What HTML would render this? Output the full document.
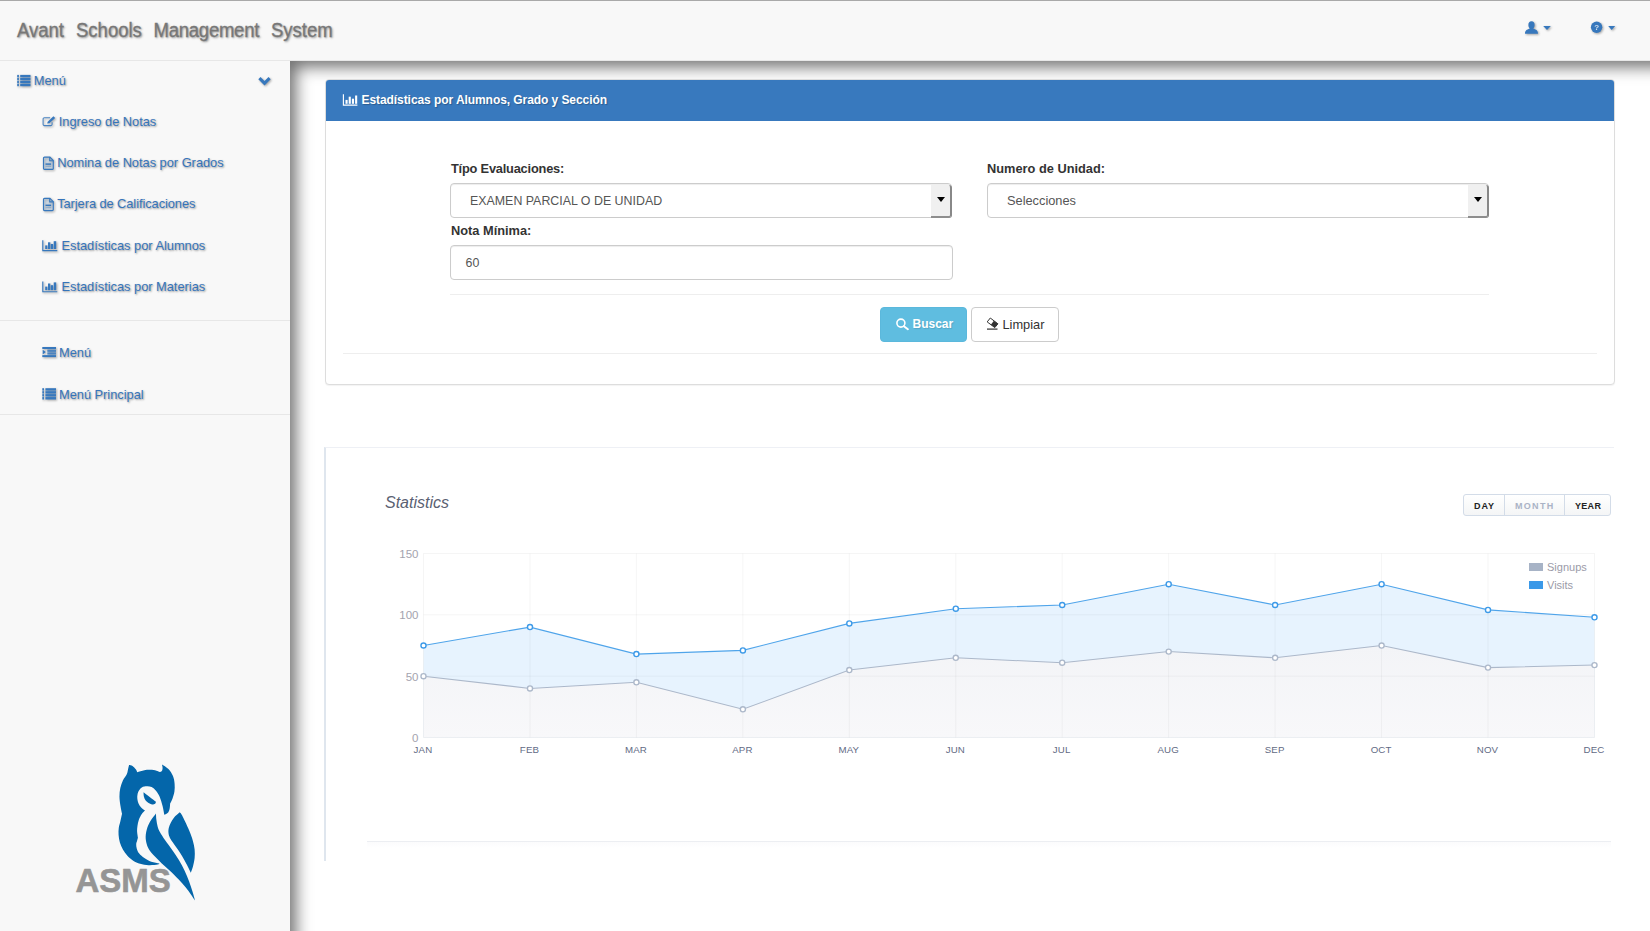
<!DOCTYPE html>
<html lang="es">
<head>
<meta charset="utf-8">
<title>Avant Schools Management System</title>
<style>
*{box-sizing:border-box;margin:0;padding:0}
html,body{width:1650px;height:931px;overflow:hidden;background:#fff;font-family:"Liberation Sans",Arial,sans-serif;font-size:13px;color:#333}
#page{position:relative;width:1650px;height:931px;overflow:hidden}
.abs{position:absolute}
svg{display:block;overflow:visible}
/* navbar */
#nav{position:absolute;left:0;top:0;width:1650px;height:61px;background:#f8f8f8;border-top:1px solid #a9a9a9;border-bottom:1px solid #e7e7e7}
#brand{position:absolute;left:17px;top:18px;font-size:18.5px;line-height:24px;color:#777;-webkit-text-stroke:.25px #777;text-shadow:1px 1px 2px rgba(0,0,0,.45);white-space:nowrap}
#brand span{position:absolute;top:0;transform:translateY(-.4px) scaleY(1.135);transform-origin:0 17.8px}
/* sidebar */
#side{position:absolute;left:0;top:61px;width:290px;height:870px;background:#f8f8f8}
.sl{position:absolute;white-space:nowrap;color:#3674ba;font-size:12.8px;line-height:16px;text-shadow:1px 1px 2px rgba(0,0,0,.4)}
.hr{position:absolute;left:0;width:290px;height:1px;background:#e7e7e7}
.ic{position:absolute;left:0;top:0;filter:drop-shadow(1px 1px 1px rgba(0,0,0,.35))}
/* main */
#main{position:absolute;left:290px;top:61px;width:1420px;height:930px;background:#fff;box-shadow:inset 6px 6px 16px 0 rgba(0,0,0,.56)}
/* panel */
#panel{position:absolute;left:325px;top:79px;width:1290px;height:306px;border:1px solid #ddd;border-radius:4px;background:#fff;box-shadow:0 1px 1px rgba(0,0,0,.05)}
#phead{position:absolute;left:0;top:0;width:1288px;height:41px;background:#3879be;border-radius:3px 3px 0 0;color:#fff;font-size:12px;font-weight:bold}
label.l{position:absolute;font-weight:bold;font-size:12.8px;line-height:16px;color:#333;white-space:nowrap}
.inp{position:absolute;height:35px;border:1px solid #ccc;border-radius:4px;background:#fff;box-shadow:inset 0 1px 1px rgba(0,0,0,.075);font-size:12.4px;color:#555;line-height:34.5px;white-space:nowrap}
.dd{position:absolute;right:-1px;top:1px;width:21px;height:33px;background:#f0f0f0;border-right:2px solid #888;border-bottom:2px solid #8e8e8e;border-radius:0 3px 3px 0}
.dd:after{content:"";position:absolute;left:5.5px;top:11.8px;border-left:4.5px solid transparent;border-right:4.5px solid transparent;border-top:5.5px solid #000}
.line{position:absolute;height:1px;background:#eee}
.btn{position:absolute;height:35px;border-radius:4px;font-size:12px;line-height:33px;white-space:nowrap;text-align:left}
/* chart box */
#cbox{position:absolute;left:324px;top:447px;width:1290px;height:414px;border-top:1px solid #eef0f5;border-left:2px solid #dfe6ee}
#cfoot{position:absolute;left:367px;top:841px;width:1244px;height:20px;border-top:1px solid #eceef2;background:linear-gradient(#fbfbfc,#fff 6px)}
#bg{position:absolute;left:1463px;top:494px;width:148px;height:22px;border:1px solid #d3dce8;border-radius:3px;background:linear-gradient(#fff,#f4f5f6);font-size:9px;font-weight:bold;color:#222}
#bg span{position:absolute;top:.5px;line-height:21px;letter-spacing:.3px}
#bg i{position:absolute;top:0;width:1px;height:20px;background:#d3dce8}
#asms{position:absolute;left:75.5px;top:862.2px;font-size:33px;line-height:38px;font-weight:bold;color:#959595;letter-spacing:0px;-webkit-text-stroke:.6px #959595}
</style>
</head>
<body>
<div id="page">
  <div id="main"></div>
  <div id="nav">
    <div id="brand"><span style="left:0">Avant</span> <span style="left:59px">Schools</span> <span style="left:136.6px;letter-spacing:-.25px">Management</span> <span style="left:254px">System</span></div>
  </div>
  <div id="side">
    <div class="sl" style="left:33.8px;top:12px">Menú</div>
    <div class="sl" style="left:58.8px;top:53px">Ingreso de Notas</div>
    <div class="sl" style="left:57.2px;top:94px">Nomina de Notas por Grados</div>
    <div class="sl" style="left:57.2px;top:135px;letter-spacing:-.05px">Tarjera de Calificaciones</div>
    <div class="sl" style="left:61.5px;top:177px">Estadísticas por Alumnos</div>
    <div class="sl" style="left:61.5px;top:218px">Estadísticas por Materias</div>
    <div class="hr" style="top:259px"></div>
    <div class="sl" style="left:59px;top:284px">Menú</div>
    <div class="sl" style="left:59px;top:325.5px">Menú Principal</div>
    <div class="hr" style="top:353px"></div>
  </div>
  <!-- icons overlay (page coordinates) -->
  <svg class="ic" width="1650" height="931" viewBox="0 0 1650 931" fill="#3778bd">
    <!-- list icon (Menú) -->
    <g transform="translate(17.2,74.9)"><rect x="0" y="0.00" width="1.7" height="2.45"/><rect x="3.0" y="0.00" width="10.3" height="2.45"/><rect x="0" y="2.95" width="1.7" height="2.45"/><rect x="3.0" y="2.95" width="10.3" height="2.45"/><rect x="0" y="5.90" width="1.7" height="2.45"/><rect x="3.0" y="5.90" width="10.3" height="2.45"/><rect x="0" y="8.85" width="1.7" height="2.45"/><rect x="3.0" y="8.85" width="10.3" height="2.45"/></g>
    <!-- chevron -->
    <polygon points="258.3,79.2 260.5,77 264.5,81 268.5,77 270.7,79.2 264.5,85.4"/>
    <!-- edit -->
    <g transform="translate(42.5,116.1)"><path d="M9.6,6.2V8.2a1.3,1.3 0 0 1 -1.3,1.3H1.9a1.3,1.3 0 0 1 -1.3,-1.3V2.9a1.3,1.3 0 0 1 1.3,-1.3H7.6" fill="none" stroke="#3778bd" stroke-width="1.05" stroke-opacity=".9"/><path d="M4.7,7.5 5.2,5.6 10.9,.1 12.7,1.9 6.9,7.2Z"/></g>
    <!-- file 1 -->
    <g transform="translate(42.9,156.5)"><path d="M.6,1.6a1,1 0 0 1 1,-1H7L10.4,4V11.9a1,1 0 0 1 -1,1H1.6a1,1 0 0 1 -1,-1Z" fill="#3778bd" fill-opacity=".18" stroke="#3778bd" stroke-width="1.15"/><path d="M6.8,.6V4.2H10.4" fill="none" stroke="#3778bd" stroke-width="1.1"/><rect x="2.6" y="6.9" width="5.6" height="1.4"/><rect x="2.6" y="9.4" width="5.6" height="1.1" fill-opacity=".3"/></g>
    <!-- file 2 -->
    <g transform="translate(42.9,197.7)"><path d="M.6,1.6a1,1 0 0 1 1,-1H7L10.4,4V11.9a1,1 0 0 1 -1,1H1.6a1,1 0 0 1 -1,-1Z" fill="#3778bd" fill-opacity=".18" stroke="#3778bd" stroke-width="1.15"/><path d="M6.8,.6V4.2H10.4" fill="none" stroke="#3778bd" stroke-width="1.1"/><rect x="2.6" y="6.9" width="5.6" height="1.4"/><rect x="2.6" y="9.4" width="5.6" height="1.1" fill-opacity=".3"/></g>
    <!-- bar chart 1 -->
    <g transform="translate(42.2,240.2)"><path d="M.6,0V10.4H15.1" fill="none" stroke="#3778bd" stroke-width="1.15"/><rect x="3" y="5.2" width="2.2" height="3.6"/><rect x="5.8" y="2.1" width="2.3" height="6.7"/><rect x="8.6" y="3.8" width="2.3" height="5"/><rect x="11.5" y="1" width="2.5" height="7.8"/></g>
    <!-- bar chart 2 -->
    <g transform="translate(42.2,281.4)"><path d="M.6,0V10.4H15.1" fill="none" stroke="#3778bd" stroke-width="1.15"/><rect x="3" y="5.2" width="2.2" height="3.6"/><rect x="5.8" y="2.1" width="2.3" height="6.7"/><rect x="8.6" y="3.8" width="2.3" height="5"/><rect x="11.5" y="1" width="2.5" height="7.8"/></g>
    <!-- indent -->
    <g transform="translate(42.3,347)"><rect x="0" y="0" width="13.7" height="2"/><rect x="5" y="2.6" width="8.7" height="2.3" fill-opacity=".85"/><rect x="5" y="5.3" width="8.7" height="2.3" fill-opacity=".85"/><rect x="0" y="8.1" width="13.7" height="2"/><polygon points=".4,2.7 3.6,5.05 .4,7.4"/></g>
    <!-- list icon (Menú Principal) -->
    <g transform="translate(42.3,388.2)"><rect x="0" y="0.00" width="1.7" height="2.45"/><rect x="3.1" y="0.00" width="10.6" height="2.45"/><rect x="0" y="2.95" width="1.7" height="2.45"/><rect x="3.1" y="2.95" width="10.6" height="2.45"/><rect x="0" y="5.90" width="1.7" height="2.45"/><rect x="3.1" y="5.90" width="10.6" height="2.45"/><rect x="0" y="8.85" width="1.7" height="2.45"/><rect x="3.1" y="8.85" width="10.6" height="2.45"/></g>
    <!-- user -->
    <ellipse cx="1531.5" cy="24.9" rx="3.1" ry="3.6"/>
    <path d="M1525,33.7c0,-3.2 1.8,-4 4.6,-4.9v-1.6h3.8v1.6c2.8,.9 4.6,1.7 4.6,4.9Z"/>
    <polygon points="1543.2,26 1550.8,26 1547,30"/>
    <!-- question -->
    <circle cx="1596.6" cy="27.3" r="5.7"/>
    <polygon points="1608.2,26 1615.2,26 1611.7,30"/>
  </svg>
  <div class="abs" style="left:1593.5px;top:22.5px;width:6.4px;text-align:center;font-size:8px;line-height:10px;font-weight:bold;color:#f8f8f8;opacity:.8">?</div>

  <div id="panel">
    <div id="phead"><span class="abs" style="left:35.5px;top:13px;line-height:14px;white-space:nowrap;letter-spacing:-.07px;text-shadow:1px 1px 1px rgba(0,0,0,.25)">Estadísticas por Alumnos, Grado y Sección</span></div>
    <label class="l" style="left:125px;top:81px;letter-spacing:-.2px">Típo Evaluaciones:</label>
    <label class="l" style="left:661px;top:81px">Numero de Unidad:</label>
    <div class="inp" style="left:124px;top:103px;width:502px"><span style="margin-left:19px">EXAMEN PARCIAL O DE UNIDAD</span><div class="dd"></div></div>
    <div class="inp" style="left:661px;top:103px;width:502px"><span style="margin-left:19px;font-size:12.8px">Selecciones</span><div class="dd"></div></div>
    <label class="l" style="left:125px;top:143px">Nota Mínima:</label>
    <div class="inp" style="left:124px;top:165px;width:503px"><span style="margin-left:14.5px">60</span></div>
    <div class="line" style="left:124px;top:214px;width:1039px"></div>
    <div class="btn" style="left:554px;top:227px;width:87px;background:#5fbde0;border:1px solid #5bb8dc;color:#fff;font-weight:bold"><span style="margin-left:31.5px;text-shadow:1px 1px 1px rgba(0,0,0,.12)">Buscar</span></div>
    <div class="btn" style="left:645px;top:227px;width:88px;background:#fff;border:1px solid #ccc;color:#333;font-size:12.8px"><span style="margin-left:30.5px">Limpiar</span></div>
    <div class="line" style="left:17px;top:273px;width:1254px"></div>
  </div>
  <!-- panel icons -->
  <svg class="abs" style="left:0;top:0" width="1650" height="931" viewBox="0 0 1650 931">
    <g transform="translate(342.8,94.3)" fill="#fff"><path d="M.6,0V10.8H14.6" fill="none" stroke="#fff" stroke-width="1.15"/><rect x="2.7" y="5.6" width="2.1" height="3.9"/><rect x="5.9" y="2.4" width="2.1" height="7.1"/><rect x="9.1" y="4.4" width="2.1" height="5.1"/><rect x="12.3" y="1.2" width="2.1" height="8.3"/></g>
    <!-- search -->
    <circle cx="900.9" cy="323.1" r="4" fill="none" stroke="#fff" stroke-width="1.6"/>
    <path d="M903.9,326.2 907.9,329.2" stroke="#fff" stroke-width="2" stroke-linecap="round" fill="none"/>
    <!-- eraser -->
    <g fill="#333"><path d="M990.3,318 997.9,323.8 994.8,327.6 987.2,321.9Z" fill="#fff" stroke="#333" stroke-width="1"/><path d="M990.9,324.7 993.9,320.8 997.9,323.8 994.8,327.6Z"/><rect x="987" y="328.5" width="10.5" height="1.2"/></g>
  </svg>

  <div id="cbox"></div>
  <div id="cfoot"></div>
  <div id="bg"><span style="left:10px;letter-spacing:.9px">DAY</span><i style="left:40px"></i><span style="left:51px;color:#aab3c6;letter-spacing:1.3px">MONTH</span><i style="left:100px"></i><span style="left:111px">YEAR</span></div>
<svg class="abs" style="left:0;top:0" width="1650" height="931" viewBox="0 0 1650 931">
<defs><linearGradient id="gs" x1="0" y1="0" x2="0" y2="1"><stop offset="0" stop-color="#f3f4f7"/><stop offset="1" stop-color="#f8f8fa"/></linearGradient></defs>
<polygon points="423.5,645.5 530.0,627.1 636.4,654.1 742.9,650.4 849.3,623.4 955.8,608.7 1062.2,605.0 1168.7,584.2 1275.1,605.0 1381.6,584.2 1488.0,609.9 1594.5,617.3 1594.5,737.5 423.5,737.5" fill="#e7f3fe"/>
<polygon points="423.5,676.2 530.0,688.4 636.4,682.3 742.9,709.3 849.3,670.0 955.8,657.8 1062.2,662.7 1168.7,651.6 1275.1,657.8 1381.6,645.5 1488.0,667.6 1594.5,665.1 1594.5,737.5 423.5,737.5" fill="url(#gs)"/>
<g stroke="#000" stroke-opacity=".04" stroke-width="1" fill="none"><line x1="423.5" y1="553.5" x2="423.5" y2="737.5"/><line x1="530.0" y1="553.5" x2="530.0" y2="737.5"/><line x1="636.4" y1="553.5" x2="636.4" y2="737.5"/><line x1="742.9" y1="553.5" x2="742.9" y2="737.5"/><line x1="849.3" y1="553.5" x2="849.3" y2="737.5"/><line x1="955.8" y1="553.5" x2="955.8" y2="737.5"/><line x1="1062.2" y1="553.5" x2="1062.2" y2="737.5"/><line x1="1168.7" y1="553.5" x2="1168.7" y2="737.5"/><line x1="1275.1" y1="553.5" x2="1275.1" y2="737.5"/><line x1="1381.6" y1="553.5" x2="1381.6" y2="737.5"/><line x1="1488.0" y1="553.5" x2="1488.0" y2="737.5"/><line x1="1594.5" y1="553.5" x2="1594.5" y2="737.5"/><line x1="423.5" y1="737.5" x2="1594.5" y2="737.5"/><line x1="423.5" y1="676.2" x2="1594.5" y2="676.2"/><line x1="423.5" y1="614.8" x2="1594.5" y2="614.8"/><line x1="423.5" y1="553.5" x2="1594.5" y2="553.5"/></g>
<polyline points="423.5,676.2 530.0,688.4 636.4,682.3 742.9,709.3 849.3,670.0 955.8,657.8 1062.2,662.7 1168.7,651.6 1275.1,657.8 1381.6,645.5 1488.0,667.6 1594.5,665.1" fill="none" stroke="#acb8ca" stroke-width="1.05"/>
<polyline points="423.5,645.5 530.0,627.1 636.4,654.1 742.9,650.4 849.3,623.4 955.8,608.7 1062.2,605.0 1168.7,584.2 1275.1,605.0 1381.6,584.2 1488.0,609.9 1594.5,617.3" fill="none" stroke="#4fa4ea" stroke-width="1.1"/>
<g fill="#fff" stroke="#acb8ca" stroke-width="1.35"><circle cx="423.5" cy="676.2" r="2.55"/><circle cx="530.0" cy="688.4" r="2.55"/><circle cx="636.4" cy="682.3" r="2.55"/><circle cx="742.9" cy="709.3" r="2.55"/><circle cx="849.3" cy="670.0" r="2.55"/><circle cx="955.8" cy="657.8" r="2.55"/><circle cx="1062.2" cy="662.7" r="2.55"/><circle cx="1168.7" cy="651.6" r="2.55"/><circle cx="1275.1" cy="657.8" r="2.55"/><circle cx="1381.6" cy="645.5" r="2.55"/><circle cx="1488.0" cy="667.6" r="2.55"/><circle cx="1594.5" cy="665.1" r="2.55"/></g>
<g fill="#fff" stroke="#3d9ae8" stroke-width="1.4"><circle cx="423.5" cy="645.5" r="2.55"/><circle cx="530.0" cy="627.1" r="2.55"/><circle cx="636.4" cy="654.1" r="2.55"/><circle cx="742.9" cy="650.4" r="2.55"/><circle cx="849.3" cy="623.4" r="2.55"/><circle cx="955.8" cy="608.7" r="2.55"/><circle cx="1062.2" cy="605.0" r="2.55"/><circle cx="1168.7" cy="584.2" r="2.55"/><circle cx="1275.1" cy="605.0" r="2.55"/><circle cx="1381.6" cy="584.2" r="2.55"/><circle cx="1488.0" cy="609.9" r="2.55"/><circle cx="1594.5" cy="617.3" r="2.55"/></g>
<g font-family="Liberation Sans, sans-serif" font-size="11.5" fill="#a3a3ae" text-anchor="end">
<text x="418.5" y="742.0">0</text>
<text x="418.5" y="680.7">50</text>
<text x="418.5" y="619.3">100</text>
<text x="418.5" y="558.0">150</text>
</g>
<g font-family="Liberation Sans, sans-serif" font-size="9.7" letter-spacing=".15" fill="#626a84" text-anchor="middle">
<text x="423.0" y="753">JAN</text>
<text x="529.5" y="753">FEB</text>
<text x="635.9" y="753">MAR</text>
<text x="742.4" y="753">APR</text>
<text x="848.8" y="753">MAY</text>
<text x="955.3" y="753">JUN</text>
<text x="1061.7" y="753">JUL</text>
<text x="1168.2" y="753">AUG</text>
<text x="1274.6" y="753">SEP</text>
<text x="1381.1" y="753">OCT</text>
<text x="1487.5" y="753">NOV</text>
<text x="1594.0" y="753">DEC</text>
</g>
<rect x="1529" y="563" width="14" height="8" fill="#a7b3c6"/><rect x="1529" y="581" width="14" height="8" fill="#3b99e8"/>
<g font-family="Liberation Sans, sans-serif" font-size="11" fill="#9b9ba8"><text x="1547" y="570.8">Signups</text><text x="1547" y="588.8">Visits</text></g>
<text x="385" y="508" font-family="Liberation Sans, sans-serif" font-style="italic" font-size="16" fill="#5a6172">Statistics</text>
</svg>
  <!-- logo -->
  <svg class="abs" style="left:110px;top:758px" width="100" height="150" viewBox="0 0 1164 1746" fill="#0466aa">
<path d="M222.0,82.0 C228.7,83.7 249.0,84.0 262.0,92.0 C275.0,100.0 290.7,117.8 300.0,130.0 C309.3,142.2 315.0,159.2 318.0,165.0 C331.7,161.3 374.7,147.5 400.0,143.0 C425.3,138.5 446.7,137.2 470.0,138.0 C493.3,138.8 522.0,143.8 540.0,148.0 C558.0,152.2 571.7,160.5 578.0,163.0 C582.2,160.8 597.3,158.0 603.0,150.0 C608.7,142.0 611.7,127.5 612.0,115.0 C612.3,102.5 606.2,81.7 605.0,75.0 C617.5,83.8 658.7,105.5 680.0,128.0 C701.3,150.5 721.0,181.3 733.0,210.0 C745.0,238.7 749.2,270.0 752.0,300.0 C754.8,330.0 754.0,361.7 750.0,390.0 C746.0,418.3 736.3,446.7 728.0,470.0 C719.7,493.3 704.7,520.0 700.0,530.0 C699.2,539.2 698.8,567.5 695.0,585.0 C691.2,602.5 687.5,622.2 677.0,635.0 C666.5,647.8 639.5,657.5 632.0,662.0 C628.7,645.0 621.0,595.3 612.0,560.0 C603.0,524.7 590.8,480.0 578.0,450.0 C565.2,420.0 550.5,398.7 535.0,380.0 C519.5,361.3 502.5,346.7 485.0,338.0 C467.5,329.3 449.2,327.3 430.0,328.0 C410.8,328.7 387.0,330.8 370.0,342.0 C353.0,353.2 336.7,373.7 328.0,395.0 C319.3,416.3 316.3,445.8 318.0,470.0 C319.7,494.2 328.5,520.3 338.0,540.0 C347.5,559.7 363.3,576.0 375.0,588.0 C386.7,600.0 402.5,608.0 408.0,612.0 C401.3,619.2 380.0,637.0 368.0,655.0 C356.0,673.0 344.0,697.5 336.0,720.0 C328.0,742.5 323.5,768.3 320.0,790.0 C316.5,811.7 315.0,832.5 315.0,850.0 C315.0,867.5 318.3,882.0 320.0,895.0 C321.7,908.0 324.2,922.5 325.0,928.0 C323.5,933.3 319.3,947.2 316.0,960.0 C312.7,972.8 305.7,989.2 305.0,1005.0 C304.3,1020.8 306.2,1037.2 312.0,1055.0 C317.8,1072.8 325.3,1093.7 340.0,1112.0 C354.7,1130.3 376.7,1149.0 400.0,1165.0 C423.3,1181.0 450.8,1197.7 480.0,1208.0 C509.2,1218.3 559.2,1223.8 575.0,1227.0 C571.7,1229.2 575.8,1236.7 555.0,1240.0 C534.2,1243.3 484.2,1248.7 450.0,1247.0 C415.8,1245.3 380.0,1238.7 350.0,1230.0 C320.0,1221.3 295.0,1210.8 270.0,1195.0 C245.0,1179.2 220.0,1156.7 200.0,1135.0 C180.0,1113.3 164.2,1090.0 150.0,1065.0 C135.8,1040.0 123.3,1013.3 115.0,985.0 C106.7,956.7 102.2,923.3 100.0,895.0 C97.8,866.7 98.7,840.8 102.0,815.0 C105.3,789.2 113.7,767.5 120.0,740.0 C126.3,712.5 136.7,665.0 140.0,650.0 C137.0,635.0 127.0,593.3 122.0,560.0 C117.0,526.7 110.3,485.0 110.0,450.0 C109.7,415.0 113.3,381.3 120.0,350.0 C126.7,318.7 137.5,288.7 150.0,262.0 C162.5,235.3 185.0,212.0 195.0,190.0 C205.0,168.0 205.5,148.0 210.0,130.0 C214.5,112.0 220.0,90.0 222.0,82.0Z"/>
<path d="M390.0,400.0 C414.2,418.3 510.8,491.7 535.0,510.0 C533.3,513.7 532.5,527.0 525.0,532.0 C517.5,537.0 501.7,540.7 490.0,540.0 C478.3,539.3 467.5,535.5 455.0,528.0 C442.5,520.5 425.0,508.0 415.0,495.0 C405.0,482.0 399.2,465.8 395.0,450.0 C390.8,434.2 390.8,408.3 390.0,400.0Z" />
<path d="M535.0,645.0 C525.8,657.5 496.7,692.5 480.0,720.0 C463.3,747.5 445.8,777.5 435.0,810.0 C424.2,842.5 416.2,882.5 415.0,915.0 C413.8,947.5 420.5,978.3 428.0,1005.0 C435.5,1031.7 444.7,1051.7 460.0,1075.0 C475.3,1098.3 496.7,1120.0 520.0,1145.0 C543.3,1170.0 570.0,1196.7 600.0,1225.0 C630.0,1253.3 666.7,1283.3 700.0,1315.0 C733.3,1346.7 770.0,1383.3 800.0,1415.0 C830.0,1446.7 856.7,1476.7 880.0,1505.0 C903.3,1533.3 921.7,1559.2 940.0,1585.0 C958.3,1610.8 981.7,1647.5 990.0,1660.0 C985.0,1642.5 971.7,1592.5 960.0,1555.0 C948.3,1517.5 935.0,1475.0 920.0,1435.0 C905.0,1395.0 890.0,1356.7 870.0,1315.0 C850.0,1273.3 825.0,1226.7 800.0,1185.0 C775.0,1143.3 746.7,1103.3 720.0,1065.0 C693.3,1026.7 663.0,988.3 640.0,955.0 C617.0,921.7 596.2,890.8 582.0,865.0 C567.8,839.2 562.0,824.2 555.0,800.0 C548.0,775.8 543.3,745.8 540.0,720.0 C536.7,694.2 535.8,657.5 535.0,645.0Z"/>
<path d="M812.0,632.0 C800.0,643.3 760.0,673.7 740.0,700.0 C720.0,726.3 702.0,762.5 692.0,790.0 C682.0,817.5 679.0,841.3 680.0,865.0 C681.0,888.7 688.0,910.3 698.0,932.0 C708.0,953.7 724.7,972.8 740.0,995.0 C755.3,1017.2 773.3,1040.0 790.0,1065.0 C806.7,1090.0 823.3,1116.7 840.0,1145.0 C856.7,1173.3 873.3,1203.3 890.0,1235.0 C906.7,1266.7 931.7,1318.3 940.0,1335.0 C944.2,1323.3 957.5,1293.3 965.0,1265.0 C972.5,1236.7 981.7,1198.3 985.0,1165.0 C988.3,1131.7 988.3,1098.3 985.0,1065.0 C981.7,1031.7 974.2,998.3 965.0,965.0 C955.8,931.7 939.5,890.5 930.0,865.0 C920.5,839.5 911.7,820.8 908.0,812.0 C896.7,788.3 856.0,700.0 840.0,670.0 C824.0,640.0 816.7,638.3 812.0,632.0Z"/>
  </svg>
  <div id="asms">ASMS</div>
</div>
</body>
</html>
